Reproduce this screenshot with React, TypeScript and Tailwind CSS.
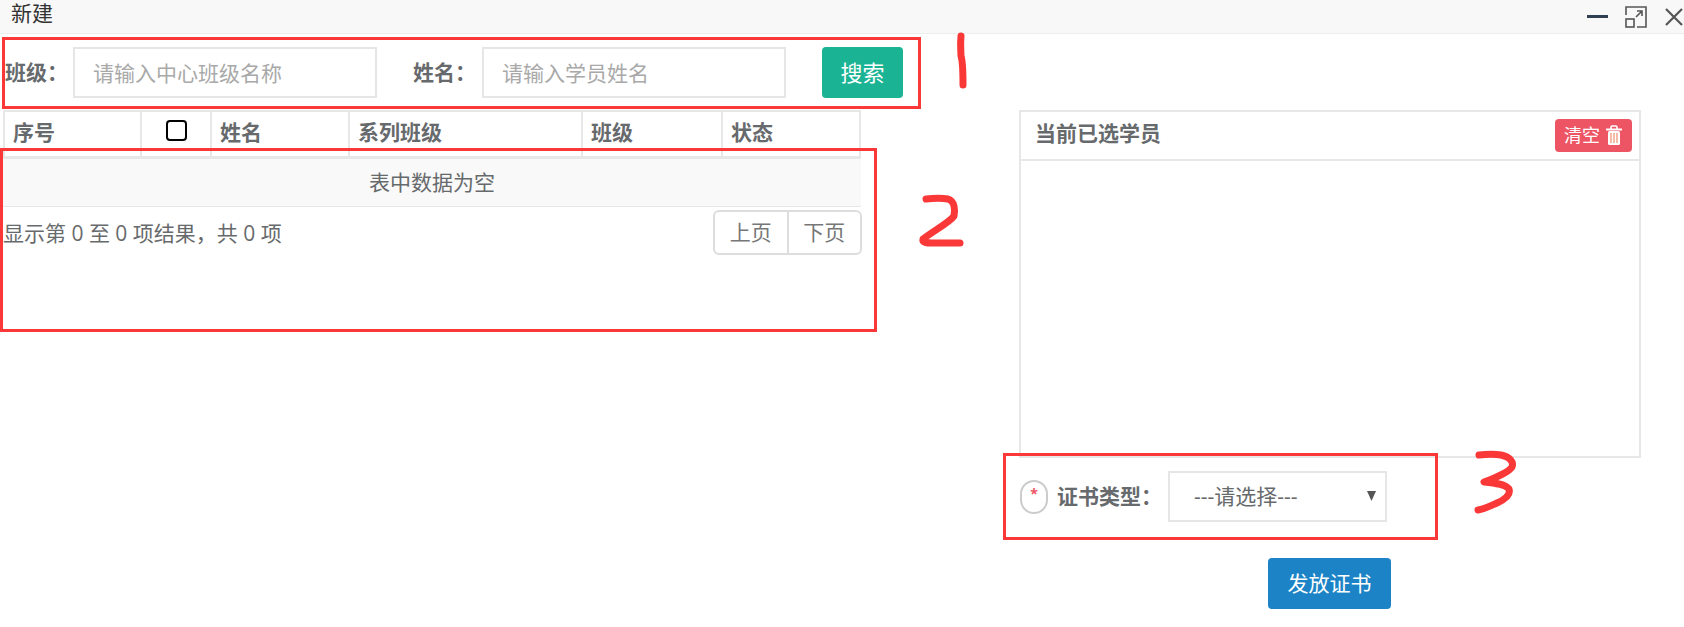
const inputCls = "h-[51px] w-[304px] shrink-0 border-2 border-[#e5e6e7] bg-white pl-[18px] text-[21px] text-[#676a6c] outline-none placeholder:text-[#a9a9a9]";
const labelCls = "text-[21px] font-bold text-[#676a6c] leading-none";
const cols = [
  { label: "序号", w: "w-[137px]" },
  { label: "", w: "w-[70px]" },
  { label: "姓名", w: "w-[138px]" },
  { label: "系列班级", w: "w-[233px]" },
  { label: "班级", w: "w-[140px]" },
  { label: "状态", w: "w-[138px]" },
];

function Trash() {
  return (
    <svg width="18" height="21" viewBox="0 0 18 21">
      <path d="M1 4.5h16" stroke="#fff" strokeWidth="2" />
      <path d="M6 4V2.2C6 1.5 6.5 1 7.2 1h3.6c.7 0 1.2.5 1.2 1.2V4" stroke="#fff" strokeWidth="1.6" fill="none" />
      <rect x="3" y="6" width="12" height="14" rx="1.5" fill="#fff" />
      <path d="M6 8v10M9 8v10M12 8v10" stroke="#f0a080" strokeWidth="1.4" />
    </svg>
  );
}

function WindowControls() {
  return (
    <div className="flex items-center">
      <div className="h-[3px] w-[21px] bg-[#2f4050]" />
      <svg className="ml-[17px]" width="22" height="22" viewBox="0 0 22 22" fill="none" stroke="#555" strokeWidth="1.6">
        <path d="M1 9V1h20v20h-9" />
        <rect x="1" y="13" width="8" height="8" />
        <path d="M11 11l6-6M12 5h5v5" />
      </svg>
      <svg className="ml-[18px]" width="18" height="18" viewBox="0 0 18 18" fill="none" stroke="#555" strokeWidth="2.2">
        <path d="M1 1l16 16M17 1L1 17" />
      </svg>
    </div>
  );
}

export default function App() {
  return (
    <div className="relative h-[627px] w-[1684px] overflow-hidden bg-white" style={{ fontFamily: '"Open Sans","Noto Sans CJK SC",sans-serif' }}>
      <div className="flex h-[34px] items-center justify-between border-b border-[#eeeeee] bg-[#f8f8f8] pl-[11px] pr-px">
        <span className="pb-[6px] text-[21px] leading-none text-[#333333]">新建</span>
        <WindowControls />
      </div>

      <div className="flex">
        <div className="w-[930px] shrink-0">
          <div className="mt-[13px] flex items-center pl-[5px]">
            <span className={`${labelCls} w-[68px]`}>班级：</span>
            <input className={inputCls} placeholder="请输入中心班级名称" />
            <span className={`${labelCls} ml-[36px] w-[69px]`}>姓名：</span>
            <input className={inputCls} placeholder="请输入学员姓名" />
            <button className="ml-[36px] h-[51px] w-[81px] rounded-[4px] bg-[#1ab394] text-[22px] text-white">搜索</button>
          </div>

          <div className="ml-[3px] mt-[12px] w-[858px]">
            <div className="flex h-[49px] border-2 border-b-[3px] border-[#e7e7e7]">
              {cols.map((c, i) => (
                <div
                  key={i}
                  className={`${c.w} flex shrink-0 items-start border-[#e7e7e7] pl-[8px] pt-[4px] text-[21px] font-bold leading-[32px] text-[#676a6c] ${i < 5 ? "border-r-2" : ""}`}
                >
                  {i === 1 ? <span className="ml-[16px] mt-[4px] block h-[21px] w-[21px] rounded-[4px] border-2 border-black" /> : c.label}
                </div>
              ))}
            </div>
            <div className="flex h-[48px] items-center justify-center border-b border-[#e7e7e7] bg-[#f9f9f9] text-[21px] text-[#676a6c]">表中数据为空</div>
            <div className="flex items-start justify-between">
              <span className="mt-[12px] text-[21px] leading-[28px] text-[#676a6c]">显示第 0 至 0 项结果，共 0 项</span>
              <div className="mr-[-1px] mt-[3px] flex h-[45px] w-[149px] overflow-hidden rounded-[6px] border-2 border-[#dddddd] text-[21px] text-[#777777]">
                <span className="flex flex-1 items-center justify-center border-r-2 border-[#dddddd]">上页</span>
                <span className="flex flex-1 items-center justify-center">下页</span>
              </div>
            </div>
          </div>
        </div>

        <div className="ml-[89px] w-[622px]">
          <div className="mt-[76px] h-[348px] border-2 border-[#e7e7e7]">
            <div className="flex h-[49px] items-start justify-between border-b-2 border-[#e7e7e7] pl-[14px] pr-[7px]">
              <span className="mt-[5px] text-[21px] font-bold leading-[32px] text-[#676a6c]">当前已选学员</span>
              <button className="mt-[7px] flex h-[33px] w-[77px] items-center justify-center gap-[5px] rounded-[4px] bg-[#ed5565] text-[18px] text-white">
                清空 <Trash />
              </button>
            </div>
          </div>
          <div className="ml-px mt-[13px] flex items-center">
            <span className="flex h-[34px] w-[28px] items-center justify-center rounded-[14px] border-2 border-[#cccccc] pb-[6px] text-[14px] font-bold leading-none text-[#ed5565]">*</span>
            <span className={`${labelCls} ml-[9px] w-[111px]`}>证书类型：</span>
            <div className="flex h-[51px] w-[219px] items-center justify-between border-2 border-[#e5e6e7] pl-[24px] pr-[9px] text-[21px] text-[#676a6c]">
              <span>---请选择---</span>
              <svg className="mt-[-2px]" width="9" height="10" viewBox="0 0 9 10"><path d="M0 0h9L4.5 10z" fill="#555" /></svg>
            </div>
          </div>
          <button className="ml-[249px] mt-[36px] h-[51px] w-[123px] rounded-[4px] bg-[#1c84c6] text-[21px] text-white">发放证书</button>
        </div>
      </div>

      {/* hand-drawn annotations lying over the page */}
      <div className="absolute left-[2px] top-[37px] h-[72px] w-[919px] border-[3px] border-[#fb3838]" />
      <div className="absolute left-0 top-[148px] h-[184px] w-[877px] border-[3px] border-[#fb3838]" />
      <div className="absolute left-[1003px] top-[453px] h-[87px] w-[435px] border-[3px] border-[#fb3838]" />
      <svg className="absolute left-0 top-0" width="1684" height="627" fill="none" stroke="#fb3838" strokeWidth="7" strokeLinecap="round" strokeLinejoin="round">
        <path d="M961 36C960 45 961 52 961 56C963 62 963 75 963 85" />
        <path d="M926 199C935 198 942 198 948 199C955 201 955 210 954 216C950 222 935 230 923 239C922 243 928 243 932 243L960 243" />
        <path d="M1479 455C1488 454 1495 454 1501 455C1510 457 1514 462 1512 467C1508 473 1495 478 1484 482C1495 483 1505 484 1509 489C1511 495 1506 499 1497 503C1490 506 1484 509 1478 510" />
      </svg>
    </div>
  );
}
